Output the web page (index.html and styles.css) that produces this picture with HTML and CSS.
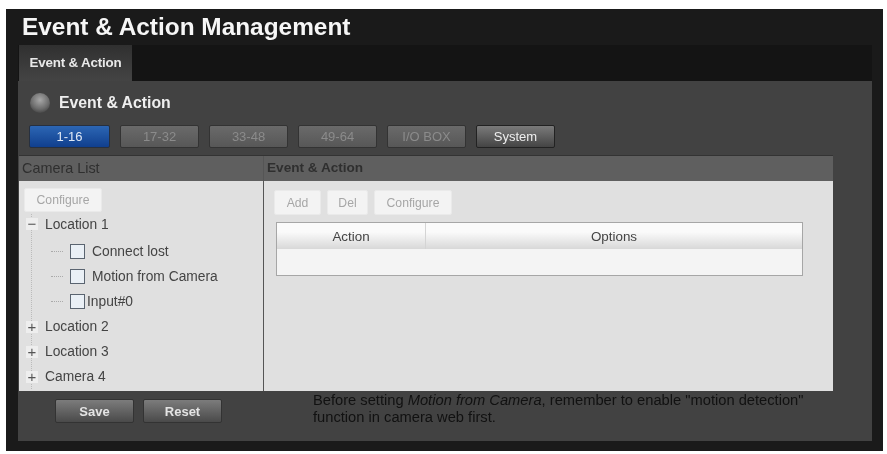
FILE: index.html
```html
<!DOCTYPE html>
<html lang="en">
<head>
    <meta charset="UTF-8">
    <title>Event &amp; Action Management</title>
    <link rel="stylesheet" href="styles.css">
</head>
<body>
    <div class="frame">
        <h1 class="title">Event &amp; Action Management</h1>
        <div class="tabs">
            <div class="tab">Event &amp; Action</div>
        </div>
        <div class="panel">
            <div class="panel-head">
                <span class="bullet"></span>
                <span>Event &amp; Action</span>
            </div>
            <div class="groups">
                <button class="group active">1-16</button>
                <button class="group">17-32</button>
                <button class="group">33-48</button>
                <button class="group">49-64</button>
                <button class="group">I/O BOX</button>
                <button class="group on">System</button>
            </div>
            <div class="columns">
                <div class="col-left">
                    <div class="col-head">Camera List</div>
                    <div class="col-body tree-body">
                        <button class="light-btn cfg-left">Configure</button>
                        <ul class="tree">
                            <li class="node first"><span class="toggle">&minus;</span>Location 1</li>
                            <li class="leaf"><span class="dash"></span><span class="check"></span><span class="leaf-text">Connect lost</span></li>
                            <li class="leaf"><span class="dash"></span><span class="check"></span><span class="leaf-text">Motion from Camera</span></li>
                            <li class="leaf"><span class="dash"></span><span class="check"></span><span class="leaf-tight">Input#0</span></li>
                            <li class="node"><span class="toggle">+</span>Location 2</li>
                            <li class="node"><span class="toggle">+</span>Location 3</li>
                            <li class="node"><span class="toggle">+</span>Camera 4</li>
                        </ul>
                    </div>
                </div>
                <div class="col-right">
                    <div class="col-head">Event &amp; Action</div>
                    <div class="col-body">
                        <div class="actions">
                            <button class="light-btn add">Add</button>
                            <button class="light-btn del">Del</button>
                            <button class="light-btn conf">Configure</button>
                        </div>
                        <div class="grid">
                            <div class="grid-head">
                                <div class="cell-action">Action</div>
                                <div class="cell-options">Options</div>
                            </div>
                            <div class="grid-row"></div>
                        </div>
                    </div>
                </div>
            </div>
            <div class="footer">
                <div class="footer-btns">
                    <button class="dark-btn">Save</button>
                    <button class="dark-btn">Reset</button>
                </div>
                <p class="note">Before setting <em>Motion from Camera</em>, remember to enable "motion detection" function in camera web first.</p>
            </div>
        </div>
    </div>
</body>
</html>
```

FILE: styles.css
```css
* {
    margin: 0;
    padding: 0;
    box-sizing: border-box;
    font-family: "Liberation Sans", Arial, sans-serif;
}

body {
    background: #fff;
    overflow: hidden;
}

.frame {
    width: 877px;
    height: 442px;
    margin: 9px 0 0 6px;
    padding: 0 11px 10px 12px;
    background: #1a1a1a;
    filter: blur(0.7px);
    display: flex;
    flex-direction: column;
}

.title {
    height: 36px;
    padding: 4px 0 0 4px;
    font-size: 24.4px;
    line-height: 28px;
    color: #f6f6f6;
}

.tabs {
    height: 36px;
    display: flex;
    background: #141414;
}

.tab {
    width: 113px;
    margin-left: 1px;
    padding-top: 10px;
    background: linear-gradient(#303030, #444);
    color: #e8e8e8;
    font-size: 13.4px;
    font-weight: bold;
    text-align: center;
    letter-spacing: -0.2px;
}

.panel {
    flex: 1;
    background: #424242;
    display: flex;
    flex-direction: column;
}

.panel-head {
    height: 44px;
    display: flex;
    align-items: center;
    gap: 9px;
    padding-left: 12px;
    color: #eee;
    font-size: 15.8px;
    font-weight: bold;
}

.bullet {
    width: 20px;
    height: 20px;
    border-radius: 50%;
    background: radial-gradient(circle at 50% 35%, #a8a8a8, #6c6c6c 55%, #2a2a2a);
}

.groups {
    height: 30px;
    display: flex;
    gap: 10px;
    padding-left: 11px;
}

.group {
    width: 79px;
    height: 23px;
    border: 1px solid #333;
    border-radius: 2px;
    background: linear-gradient(#6a6a6a, #575757);
    color: #8b8b8b;
    font-size: 13px;
}

.group.active {
    width: 81px;
    background: linear-gradient(#2c66b4, #103f8e);
    color: #dfe9f6;
    border-color: #27303f;
}

.group.on {
    background: linear-gradient(#7a7a7a, #444);
    color: #eee;
    border-color: #222;
}

.columns {
    height: 236px;
    display: flex;
    margin-left: 1px;
    margin-right: 39px;
    border-top: 1px solid #333;
}

.col-left {
    width: 245px;
    display: flex;
    flex-direction: column;
    border-right: 1px solid #555;
}

.col-right {
    flex: 1;
    display: flex;
    flex-direction: column;
}

.col-head {
    height: 25px;
    padding: 4px 0 0 3px;
    background: #5f5f5f;
    color: #2f2f2f;
    font-size: 13.6px;
    font-weight: bold;
}

.col-left .col-head {
    font-weight: normal;
    font-size: 14.4px;
}

.col-body {
    flex: 1;
    background: #e0e0e0;
    padding: 9px 0 0 10px;
}

.tree-body {
    padding: 7px 0 0 5px;
}

.light-btn {
    height: 25px;
    border: 1px solid #eaeaea;
    border-radius: 2px;
    background: #f3f3f3;
    color: #a6a6a6;
    font-size: 12.2px;
}

.add {
    width: 47px;
}

.del {
    width: 41px;
}

.conf {
    width: 78px;
}

.cfg-left {
    width: 78px;
    height: 24px;
}

.tree {
    list-style: none;
    margin-top: 2px;
    border-left: 1px dotted #bbb;
    margin-left: 7px;
}

.node,
.leaf {
    height: 25px;
    display: flex;
    align-items: center;
    font-size: 13.8px;
    color: #444;
}

.node.first {
    padding-bottom: 5px;
}

.toggle {
    width: 12px;
    height: 12px;
    margin: 0 7px 0 -6px;
    background: #eee;
    color: #555;
    font-size: 15px;
    line-height: 11px;
    text-align: center;
}

.leaf {
    padding-left: 19px;
}

.dash {
    width: 12px;
    border-top: 1px dotted #aaa;
    margin-right: 7px;
}

.check {
    width: 15px;
    height: 15px;
    border: 1px solid #5a6470;
    background: #eaf0f6;
}

.leaf-text {
    margin-left: 7px;
}

.leaf-tight {
    margin-left: 2px;
}

.actions {
    display: flex;
    gap: 6px;
}

.grid {
    width: 527px;
    margin: 7px 0 0 2px;
    border: 1px solid #a6a6a6;
    background: #f4f4f4;
}

.grid-head {
    height: 26px;
    display: flex;
    background: linear-gradient(#fafafa 35%, #d8d8d8);
    color: #444;
    font-size: 13.4px;
    line-height: 27px;
    text-align: center;
}

.cell-action {
    width: 149px;
    border-right: 1px solid #d4d4d4;
}

.cell-options {
    flex: 1;
}

.grid-row {
    height: 26px;
}

.footer {
    flex: 1;
    display: flex;
}

.footer-btns {
    width: 245px;
    display: flex;
    gap: 9px;
    padding: 8px 0 0 37px;
}

.dark-btn {
    width: 79px;
    height: 24px;
    border: 1px solid #333;
    border-radius: 2px;
    background: linear-gradient(#7c7c7c, #4a4a4a);
    color: #e4e4e4;
    font-size: 13px;
    font-weight: bold;
}

.note {
    width: 505px;
    margin: 1px 0 0 50px;
    color: #111;
    font-size: 14.7px;
    line-height: 17px;
}
```
